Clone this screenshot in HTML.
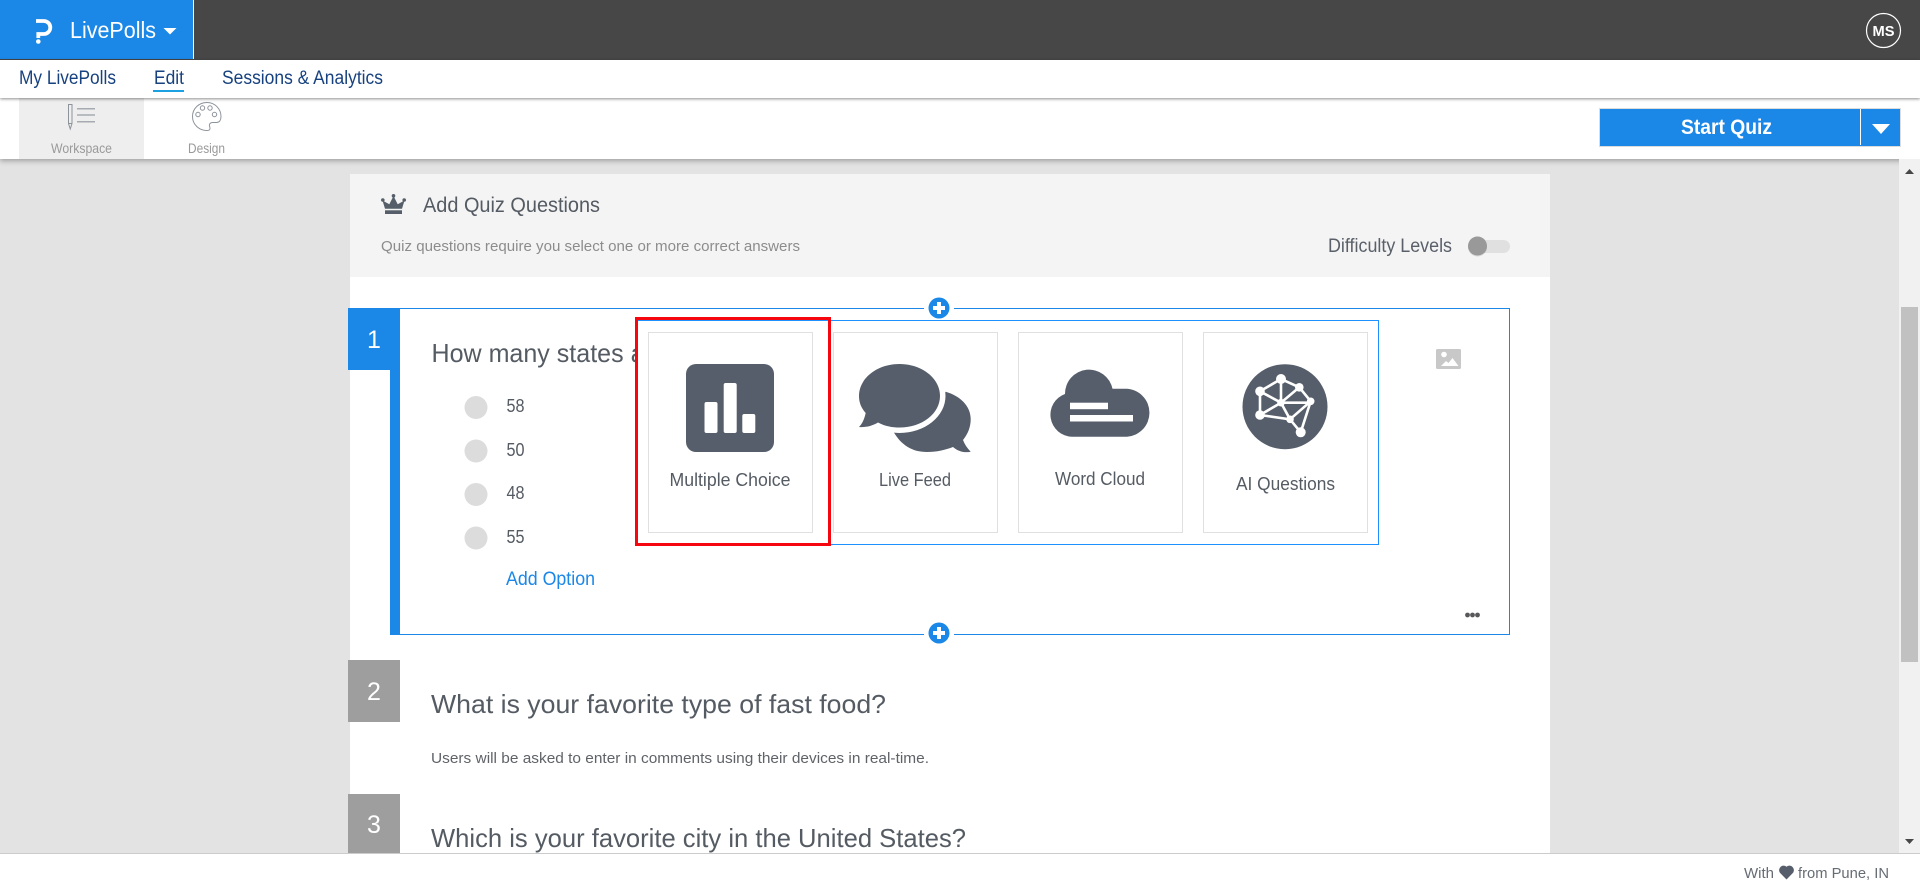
<!DOCTYPE html>
<html lang="en"><head><meta charset="utf-8"><title>LivePolls</title>
<style>
html,body{margin:0;padding:0;width:1920px;height:893px;overflow:hidden;background:#e3e3e3}
div{position:absolute;box-sizing:border-box}
svg{position:absolute;left:0;top:0}
text{font-family:"Liberation Sans",sans-serif}
</style></head><body>
<div style="left:0;top:0;width:1920px;height:60px;background:#474747"></div>
<div style="left:0;top:0;width:193px;height:59px;background:#1b87e6"></div>
<div style="left:193px;top:0;width:1px;height:59px;background:#fff"></div>
<div style="left:0;top:159px;width:1899px;height:694px;background:#e3e3e3"></div>
<div style="left:0;top:98px;width:1920px;height:61px;background:#fff;box-shadow:0 2px 5px rgba(0,0,0,.3)"></div>
<div style="left:19px;top:98px;width:125px;height:61px;background:#eee"></div>
<div style="left:0;top:60px;width:1920px;height:38px;background:#fff;box-shadow:0 1px 3px rgba(0,0,0,.45)"></div>
<div style="left:350px;top:174px;width:1200px;height:679px;background:#fff"></div>
<div style="left:350px;top:174px;width:1200px;height:103px;background:#f4f4f4"></div>
<div style="left:1899px;top:159px;width:21px;height:694px;background:#f1f1f1"></div>
<div style="left:1901px;top:307px;width:17px;height:355px;background:#c1c1c1"></div>
<div style="left:390px;top:308px;width:1120px;height:327px;border:1.5px solid #1b87e6;border-left:10px solid #1b87e6"></div>
<div style="left:348px;top:308px;width:52px;height:62px;background:#1b87e6"></div>
<div style="left:348px;top:660px;width:52px;height:62px;background:#9e9e9e"></div>
<div style="left:348px;top:794px;width:52px;height:59px;background:#9e9e9e"></div>
<div style="left:636px;top:320px;width:743px;height:225px;background:#fff;border:1.5px solid #1e90ff"></div>
<div style="left:648px;top:332px;width:165px;height:201px;border:1px solid #e0e0e0;background:#fff"></div>
<div style="left:833px;top:332px;width:165px;height:201px;border:1px solid #e0e0e0;background:#fff"></div>
<div style="left:1018px;top:332px;width:165px;height:201px;border:1px solid #e0e0e0;background:#fff"></div>
<div style="left:1203px;top:332px;width:165px;height:201px;border:1px solid #e0e0e0;background:#fff"></div>
<div style="left:635px;top:317px;width:196px;height:229px;border:3px solid #f6060f"></div>
<div style="left:0;top:853px;width:1920px;height:40px;background:#fff;border-top:1px solid #ccc"></div>
<svg width="1920" height="893" viewBox="0 0 1920 893" xmlns="http://www.w3.org/2000/svg">
<defs><clipPath id="q1clip"><rect x="420" y="330" width="215" height="50"/></clipPath></defs>
<!-- logo -->
<path d="M36 21H43.800a6.500 6.500 0 0 1 0 13H38.300V38" fill="none" stroke="#fff" stroke-width="3.800"/>
<circle cx="38.300" cy="41.500" r="2.300" fill="#fff"/>
<text x="70" y="38" font-size="23" fill="#fff" textLength="86" lengthAdjust="spacingAndGlyphs">LivePolls</text>
<path d="M163.500 28H176.500L170 34.500Z" fill="#fff"/>
<circle cx="1883.500" cy="30.500" r="17" fill="none" stroke="#fff" stroke-width="1.200"/>
<text x="1872.500" y="36" font-size="15" font-weight="700" fill="#fff" textLength="22" lengthAdjust="spacingAndGlyphs">MS</text>
<!-- nav -->
<g font-size="19" fill="#17427f">
<text x="19" y="84" textLength="97" lengthAdjust="spacingAndGlyphs">My LivePolls</text>
<text x="154" y="84" textLength="30" lengthAdjust="spacingAndGlyphs">Edit</text>
<text x="222" y="84" textLength="161" lengthAdjust="spacingAndGlyphs">Sessions &amp; Analytics</text>
</g>
<rect x="153" y="90" width="31" height="2" fill="#1ba1e2"/>
<!-- tools -->
<g fill="none" stroke="#8d939b" stroke-width="1">
<path d="M68.500 104.500h3.500v19l-1.750 5.500l-1.750-5.500z"/><path d="M68.500 123.500h3.500"/>
<path d="M77 108.700h18M77 115h18M77 121.700h18" stroke="#a6abb1" stroke-width="1.500"/>
<path d="M207 102.500c-8 0-14.500 6-14.500 14c0 8 6.500 14 14.500 14c4 0 3-3 2.500-4.500c-.5-2 1-3.500 3-3.500h4c3 0 4.500-2.500 4.500-6c0-7.500-6-14-14-14z"/>
<circle cx="198" cy="114.500" r="2.200"/><circle cx="202.500" cy="108" r="2.200"/><circle cx="210" cy="108" r="2.200"/><circle cx="214.500" cy="114.500" r="2.200"/>
</g>
<text x="51" y="153" font-size="14" fill="#9a9a9a" textLength="61" lengthAdjust="spacingAndGlyphs">Workspace</text>
<text x="188" y="153" font-size="14" fill="#9a9a9a" textLength="37" lengthAdjust="spacingAndGlyphs">Design</text>
<!-- start quiz -->
<rect x="1599.500" y="108.500" width="301" height="38" fill="#1b87e6" stroke="#dcdcdc"/>
<rect x="1860" y="109" width="1" height="36" fill="#fff"/>
<text x="1681" y="134" font-size="21" font-weight="700" fill="#fff" textLength="91" lengthAdjust="spacingAndGlyphs">Start Quiz</text>
<path d="M1872 124H1890L1881 134Z" fill="#fff"/>
<!-- scroll arrows -->
<path d="M1905 174H1914L1909.500 169Z" fill="#474747"/>
<path d="M1905 839H1914L1909.500 844Z" fill="#474747"/>
<!-- header -->
<circle cx="382.800" cy="200" r="1.800" fill="#555e69"/><circle cx="393.500" cy="195.800" r="1.800" fill="#555e69"/><circle cx="404.200" cy="200" r="1.800" fill="#555e69"/>
<path d="M385 208.800L382.500 200.500L389.300 204.300L393.500 196L397.700 204.300L404.500 200.500L402 208.800Z" fill="#555e69"/>
<rect x="385" y="210.300" width="17" height="3.700" fill="#555e69"/>
<text x="423" y="212" font-size="21" fill="#555b63" textLength="177" lengthAdjust="spacingAndGlyphs">Add Quiz Questions</text>
<text x="381" y="251" font-size="15" fill="#8c8c8c" textLength="419" lengthAdjust="spacingAndGlyphs">Quiz questions require you select one or more correct answers</text>
<text x="1328" y="252" font-size="19" fill="#5a6069" textLength="124" lengthAdjust="spacingAndGlyphs">Difficulty Levels</text>
<rect x="1468" y="240" width="42" height="13" rx="6.500" fill="#e0e0e0"/>
<circle cx="1477.500" cy="247" r="9.500" fill="#000" opacity=".12"/>
<circle cx="1477.500" cy="246" r="9.500" fill="#999"/>
<!-- plus buttons -->
<g>
<rect x="924" y="305" width="30" height="6" fill="#fff"/>
<circle cx="939" cy="308" r="10.500" fill="#1b87e6"/><path d="M933 308h12M939 302v12" stroke="#fff" stroke-width="4"/>
<rect x="924" y="631" width="30" height="6" fill="#fff"/>
<circle cx="939" cy="633" r="10.500" fill="#1b87e6"/><path d="M933 633h12M939 627v12" stroke="#fff" stroke-width="4"/>
</g>
<!-- numbers -->
<g font-size="25" fill="#fff" text-anchor="middle">
<text x="374" y="348">1</text><text x="374" y="700">2</text><text x="374" y="833">3</text>
</g>
<!-- Q1 -->
<text x="431.500" y="362" font-size="26" fill="#555b63" textLength="213" lengthAdjust="spacingAndGlyphs" clip-path="url(#q1clip)">How many states a</text>
<g fill="#dcdcdc"><circle cx="476" cy="407.500" r="11.500"/><circle cx="476" cy="451" r="11.500"/><circle cx="476" cy="494.500" r="11.500"/><circle cx="476" cy="538" r="11.500"/></g>
<g font-size="18" fill="#555b63">
<text x="506.500" y="412" textLength="18" lengthAdjust="spacingAndGlyphs">58</text>
<text x="506.500" y="456" textLength="18" lengthAdjust="spacingAndGlyphs">50</text>
<text x="506.500" y="499" textLength="18" lengthAdjust="spacingAndGlyphs">48</text>
<text x="506.500" y="543" textLength="18" lengthAdjust="spacingAndGlyphs">55</text>
</g>
<text x="506" y="585" font-size="19" fill="#1b87e6" textLength="89" lengthAdjust="spacingAndGlyphs">Add Option</text>
<!-- image icon -->
<rect x="1436" y="349" width="25" height="20" rx="1.500" fill="#c8c8c8"/>
<circle cx="1444" cy="354.500" r="2.800" fill="#fff"/>
<path d="M1441 366l5-5l2.500 2l4-5l6 8z" fill="#fff"/>
<g fill="#58585a"><circle cx="1467.500" cy="615" r="2.400"/><circle cx="1472.500" cy="615" r="2.400"/><circle cx="1477.500" cy="615" r="2.400"/></g>
<!-- Q2, Q3 -->
<text x="431" y="713" font-size="26" fill="#555b63" textLength="455" lengthAdjust="spacingAndGlyphs">What is your favorite type of fast food?</text>
<text x="431" y="763" font-size="15" fill="#5f6368" textLength="498" lengthAdjust="spacingAndGlyphs">Users will be asked to enter in comments using their devices in real-time.</text>
<text x="431" y="847" font-size="26" fill="#555b63" textLength="535" lengthAdjust="spacingAndGlyphs">Which is your favorite city in the United States?</text>
<!-- card 1 icon -->
<rect x="686" y="364" width="88" height="88" rx="10" fill="#555e6a"/>
<g fill="#fff"><rect x="704.500" y="402" width="13" height="31" rx="2"/><rect x="723.700" y="383" width="13" height="50" rx="2"/><rect x="742.300" y="414" width="13" height="19" rx="2"/></g>
<!-- card 2 icon -->
<path d="M945.700 391.700c14 4 25 14 25 27.300c0 8.500-3 15-7.700 21c1.500 4 4 8 7.700 11.700c-6.500 1.300-12 0-17.700-4.700c-8 3-16 5-26 5c-15 0-26-7-34-21z" fill="#555e6a"/>
<ellipse cx="899.500" cy="396" rx="46" ry="37" fill="#fff"/>
<path d="M899.500 364c22.500 0 40.500 14.300 40.500 32s-18 31.500-40.500 31.500c-8 0-15-1.500-21.500-5c-6 3.500-12 5-19 4.500c3.500-3.500 5.500-8.500 6.700-14c-4.500-5-6.700-10.500-6.700-17c0-17.700 18-32 40.500-32z" fill="#555e6a"/>
<!-- card 3 icon -->
<path d="M1072 436.700a22 22 0 0 1-7-42.700a24 24 0 0 1 47.500-5.200h14.500a24 24 0 0 1 0 47.900z" fill="#555e6a"/>
<rect x="1070" y="402.700" width="38" height="6.500" fill="#fff"/><rect x="1070" y="415" width="63" height="6.500" fill="#fff"/>
<!-- card 4 icon -->
<circle cx="1285" cy="406.700" r="42.500" fill="#555e6a"/>
<g stroke="#fff" stroke-width="2.600" fill="none">
<path d="M1281 379L1299.300 387.300L1310.700 401.300L1300.700 432.300L1290 419.300L1260 415L1260 391.300L1281 379Z"/>
<path d="M1281 379V402.700M1260 391.300L1281 402.700L1299.300 387.300M1281 402.700H1310.700M1281 402.700L1260 415M1281 402.700L1290 419.300L1310.700 401.300"/>
</g>
<g fill="#fff"><circle cx="1281" cy="379" r="5"/><circle cx="1299.300" cy="387.300" r="4.300"/><circle cx="1260" cy="391.300" r="4.800"/><circle cx="1310.700" cy="401.300" r="3.800"/><circle cx="1281" cy="402.700" r="3.800"/><circle cx="1260" cy="415" r="4.800"/><circle cx="1290" cy="419.300" r="3.800"/><circle cx="1300.700" cy="432.300" r="5"/></g>
<!-- card labels -->
<g font-size="18" fill="#555b63">
<text x="669.500" y="486" textLength="121" lengthAdjust="spacingAndGlyphs">Multiple Choice</text>
<text x="879" y="486" textLength="72" lengthAdjust="spacingAndGlyphs">Live Feed</text>
<text x="1055" y="485" textLength="90" lengthAdjust="spacingAndGlyphs">Word Cloud</text>
<text x="1236" y="490" textLength="99" lengthAdjust="spacingAndGlyphs">AI Questions</text>
</g>
<!-- footer -->
<text x="1744" y="878" font-size="15" fill="#666c74" textLength="30" lengthAdjust="spacingAndGlyphs">With</text>
<path d="M1786.500 879.500l-6.600-6.800a4.500 4.500 0 0 1 6.600-6a4.500 4.500 0 0 1 6.600 6z" fill="#555e6a"/>
<text x="1798" y="878" font-size="15" fill="#666c74" textLength="91" lengthAdjust="spacingAndGlyphs">from Pune, IN</text>
</svg>
</body></html>
